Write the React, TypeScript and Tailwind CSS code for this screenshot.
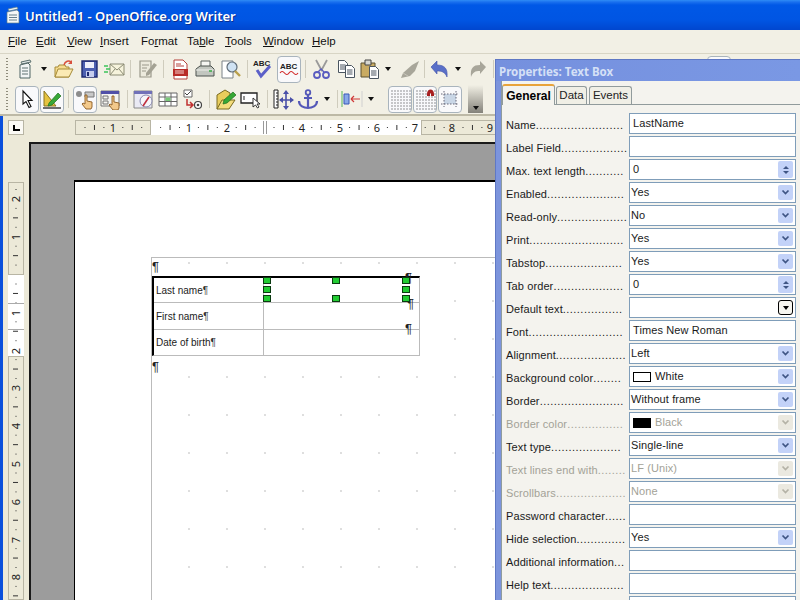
import React from "react";

const uiFont = "font-['Liberation_Sans',sans-serif]";

// toolbar bits
const Slot = ({ className = "", on = false, children }: { className?: string; on?: boolean; children?: React.ReactNode }) => (
  <div
    className={`w-[24px] h-[27px] shrink-0 flex items-center justify-center rounded-[4px] ${
      on ? "bg-[#f9f9fb] border border-[#a9b4bd]" : ""
    } ${className}`}
  >
    {children}
  </div>
);

const Sep = ({ className = "" }: { className?: string }) => <div className={`w-[1px] h-[18px] shrink-0 bg-[#cfccbd] ${className}`} />;

const Arrow = ({ className = "" }: { className?: string }) => (
  <div className={`w-[12px] h-[27px] shrink-0 flex items-center justify-center ${className}`}>
    <div className="w-0 h-0 border-x-[3.5px] border-x-transparent border-t-[4px] border-t-[#111]" />
  </div>
);

const Handle = () => (
  <div className="ml-[6px] w-[2px] h-[22px] shrink-0 bg-[repeating-linear-gradient(to_bottom,#8f8c7c_0,#8f8c7c_1px,transparent_1px,transparent_3px)]" />
);

const S = ({ children }: { children: React.ReactNode }) => (
  <svg width="22" height="22" viewBox="0 0 22 22" fill="none">
    {children}
  </svg>
);

const Hand = ({ x = 0, y = 0 }: { x?: number; y?: number }) => (
  <path
    transform={`translate(${x} ${y})`}
    d="M4 1h2v6l5 1v5l-1 2H5L1 10l1-1 2 1z"
    fill="#f3c98b"
    stroke="#8a5a20"
    strokeWidth="0.9"
  />
);

const DocLines = ({ x, y }: { x: number; y: number }) => (
  <g transform={`translate(${x} ${y})`}>
    <path d="M.5.5h6l3 3v9H.5z" fill="#fff" stroke="#4a5560" />
    <path d="M2 5h5.5M2 7h5.5M2 9h5.5" stroke="#4a5560" />
  </g>
);

const NewIcon = () => (
  <S>
    <path d="M6 4l9-2 1 2-9 2z" fill="#dfe6e6" stroke="#5c7070" />
    <path d="M5 7l8-2 2 2v13H5z" fill="#f2f5f5" stroke="#4f6464" />
    <path d="M7 10h6M7 13h6M7 16h6" stroke="#5c7070" />
  </S>
);
const OpenIcon = () => (
  <S>
    <path d="M2 9h3l1-2h6l1 2h3v10H2z" fill="#f6dc8e" stroke="#a58a38" />
    <path d="M2 19l3-8h15l-4 8z" fill="#fbeab4" stroke="#a58a38" />
    <path d="M11 7c1-4 5-5 7-3" stroke="#d8503c" strokeWidth="1.5" />
    <path d="M19 2v4h-4z" fill="#d8503c" />
  </S>
);
const SaveIcon = () => (
  <S>
    <path d="M4 3h15v16H4z" fill="#4c5fb0" stroke="#1f2a70" strokeWidth="1.4" />
    <path d="M7 4h9v6H7z" fill="#eef0fa" />
    <path d="M8 13h8v6H8z" fill="#c6cdee" />
    <path d="M9 14h2v4H9z" fill="#1f2a70" />
  </S>
);
const MailIcon = () => (
  <S>
    <path d="M7 6h14v11H7z" fill="#f6f3dc" stroke="#8b8b74" />
    <path d="M7 6l7 6 7-6M7 17l5-6M21 17l-5-6" stroke="#8b8b74" />
    <path d="M1 8h4M3 11h4M1 14h4" stroke="#3cc45a" strokeWidth="1.4" />
  </S>
);
const EditIcon = () => (
  <S>
    <path d="M4 3h11v16H4z" fill="#eceadd" stroke="#9a988a" strokeWidth="1.2" />
    <path d="M6 7h7M6 10h5M6 13h4" stroke="#9a988a" />
    <path d="M10 15l8-10 3 2-8 10-3 1z" fill="#a4a294" />
  </S>
);
const PdfIcon = () => (
  <S>
    <path d="M5 2h9l4 4v15H5z" fill="#fff" stroke="#b5413a" />
    <path d="M7 6h5M7 8h8" stroke="#b5413a" />
    <path d="M4 11h15v7H4z" fill="#b82c28" />
    <path d="M6 13h9M6 15h9" stroke="#f3d0cc" />
  </S>
);
const PrintIcon = () => (
  <S>
    <path d="M7 3h9v7H7z" fill="#f6f6f2" stroke="#5c635f" />
    <path d="M2 11l4-3h11l3 3v7H2z" fill="#c2c6bf" stroke="#4c524e" />
    <path d="M2 12h18" stroke="#f0f0ec" />
    <path d="M15 13h3" stroke="#3fae4a" strokeWidth="1.6" />
  </S>
);
const PreviewIcon = () => (
  <S>
    <path d="M3 3h11v17H3z" fill="#fff" stroke="#7a8288" />
    <circle cx="13" cy="9" r="5" fill="#cfe2f3" stroke="#5f6c78" strokeWidth="1.2" />
    <path d="M16 13l5 5" stroke="#b9a04c" strokeWidth="2.4" />
  </S>
);
const SpellIcon = () => (
  <S>
    <text x="1" y="8" fontSize="8" fontFamily="Liberation Sans" fontWeight="700" fill="#222">
      ABC
    </text>
    <path d="M5 12l4 6 9-10" stroke="#5c60c8" strokeWidth="3" />
  </S>
);
const AutoSpellIcon = () => (
  <S>
    <text x="2" y="11" fontSize="8" fontFamily="Liberation Sans" fontWeight="700" fill="#222">
      ABC
    </text>
    <path d="M2 15q2-3 4.500 0t4.500 0 4.500 0 4.500 0" stroke="#d02020" strokeWidth="1.1" />
  </S>
);
const CutIcon = () => (
  <S>
    <path d="M6 2l6 11M17 2l-6 11" stroke="#9a9a9a" strokeWidth="1.8" />
    <circle cx="7" cy="17" r="3" stroke="#5a5cc0" strokeWidth="1.8" />
    <circle cx="16" cy="17" r="3" stroke="#5a5cc0" strokeWidth="1.8" />
    <path d="M8 14l3-3 3 3" stroke="#5a5cc0" strokeWidth="1.4" />
  </S>
);
const CopyIcon = () => (
  <S>
    <DocLines x={3} y={2} />
    <DocLines x={10} y={7} />
  </S>
);
const PasteIcon = () => (
  <S>
    <path d="M2 5h14v14H2z" fill="#c9ab62" stroke="#5a5030" />
    <path d="M6 2h6v5H6z" fill="#d7d7d0" stroke="#444" />
    <DocLines x={10} y={8} />
  </S>
);
const BrushIcon = () => (
  <S>
    <path d="M20 3l-7 4-9 8-2 5 9-2 5-5z" fill="#a8a69a" />
    <path d="M4 15l5 3" stroke="#c6c4b8" />
  </S>
);
const UndoIcon = () => (
  <S>
    <path d="M2 9l6-6v4c7 0 11 3 10 12-2-5-5-6-10-6v3z" fill="#5a70c8" stroke="#3f50a8" strokeWidth="0.6" />
  </S>
);
const RedoIcon = () => (
  <S>
    <path d="M20 9l-6-6v4c-7 0-10 3-9 12 2-5 4-6 9-6v3z" fill="#a8a69a" />
  </S>
);
const PointerIcon = () => (
  <S>
    <path d="M7 3v13l3-2.500 3 6 2-1-3-6h4z" fill="#fff" stroke="#111" strokeWidth="1.1" />
  </S>
);
const DesignIcon = () => (
  <S>
    <path d="M3 3l12 15H3z" fill="#e6c340" stroke="#8a7420" />
    <path d="M8 15l9-10 3 3-9 9-4 1z" fill="#38a838" stroke="#1e6e1e" strokeWidth="0.7" />
    <path d="M2 20h18" stroke="#222" strokeWidth="1.3" />
  </S>
);
const ControlIcon = () => (
  <S>
    <circle cx="5" cy="6" r="3" fill="#8c8c8c" />
    <path d="M11 4h9v5h-9z" fill="#c8c8c8" stroke="#777" />
    <Hand x={7} y={6} />
  </S>
);
const WinHandIcon = () => (
  <S>
    <path d="M2 3h18v15H2z" fill="#f4f4f0" stroke="#777" />
    <path d="M2 3h18v3H2z" fill="#5150a8" />
    <path d="M4 8h5v3H4zM4 13h5v3H4z" stroke="#777" />
    <Hand x={9} y={7} />
  </S>
);
const FormIcon = () => (
  <S>
    <path d="M2 3h18v17H2z" fill="#eaeaf4" stroke="#888" />
    <path d="M2 3h18v3H2z" fill="#7070b8" />
    <circle cx="14" cy="13" r="6" fill="#f6f6fa" stroke="#8a8ab0" />
    <path d="M11 18l6-9" stroke="#c03040" strokeWidth="1.6" />
  </S>
);
const TableIcon = () => (
  <S>
    <path d="M2 5h18v13H2z" fill="#fff" stroke="#666" />
    <path d="M2 9h18M2 13.500h18M8 5v13M14 5v13" stroke="#666" />
    <path d="M8.500 9.500h5v3.500h-5z" fill="#78c878" />
  </S>
);
const TabOrderIcon = () => (
  <S>
    <path d="M2 2h8v7H2z" fill="#fff" stroke="#666" />
    <path d="M3 5l2 2 4-4" stroke="#444" />
    <path d="M5 11v6h6M8 14l3 3-3 3" stroke="#c03030" strokeWidth="1.5" />
    <circle cx="16" cy="17" r="3.500" fill="#fff" stroke="#444" strokeWidth="1.2" />
    <circle cx="16" cy="17" r="1.300" fill="#444" />
  </S>
);
const FolderPenIcon = () => (
  <S>
    <path d="M2 7l8-5 5 3v8l-13 8z" fill="#e9cd5c" stroke="#7a6a20" />
    <path d="M2 21l5-9h13l-6 9z" fill="#f4dd7c" stroke="#7a6a20" />
    <path d="M9 12l9-8 3 3-9 8-4 1z" fill="#36a836" stroke="#1e6e1e" strokeWidth="0.7" />
  </S>
);
const FieldIcon = () => (
  <S>
    <path d="M1 5h16v10H1z" fill="#fff" stroke="#222" strokeWidth="1.3" />
    <path d="M4 8v4" stroke="#222" />
    <path d="M13 10v9l2.500-2 2 3 1.500-1-2-3h3z" fill="#fff" stroke="#222" strokeWidth="0.9" />
  </S>
);
const PositionIcon = () => (
  <S>
    <path d="M2 2h4v18H2z" fill="#fff" stroke="#222" />
    <path d="M4 5h2M4 8h2M4 11h2M4 14h2M4 17h2" stroke="#222" />
    <path d="M14 5v14M8 12h13" stroke="#4a50a8" strokeWidth="1.6" />
    <path d="M14 2l3 4h-6zM14 22l3-4h-6zM7 12l4-3v6zM22 12l-4-3v6z" fill="#4a50a8" />
  </S>
);
const AnchorIcon = () => (
  <S>
    <circle cx="11" cy="4.500" r="2.300" stroke="#5458b8" strokeWidth="1.8" />
    <path d="M11 7v13M7 10h8M2 13c0 5 5 7 9 7s9-2 9-7" stroke="#5458b8" strokeWidth="2.200" />
  </S>
);
const WrapIcon = () => (
  <S>
    <path d="M1 3v16" stroke="#58b858" />
    <path d="M21 3v16" stroke="#d0d0d0" />
    <path d="M3 6h5v10H3z" fill="#88a8e8" stroke="#3858b8" />
    <path d="M10 11h9M10 11l3-3M10 11l3 3" stroke="#d03838" strokeWidth="1.2" />
  </S>
);
const DotsGrid = ({ red = false }: { red?: boolean }) => (
  <S>
    {Array.from({ length: 7 }).flatMap((_, r) =>
      Array.from({ length: 7 }).map((_, c) => (
        <rect key={`${r}-${c}`} x={2.500 + c * 3} y={2.500 + r * 3} width="1" height="1" fill="#333" />
      ))
    )}
    {red && <path d="M13 6c0-6 7-6 7 0v2h-3V6c0-1-1-1-1 0v2h-3z" fill="#a82020" />}
  </S>
);
const FrameIcon = () => (
  <S>
    <path d="M5 6h12v10H5z" fill="#c9d6e6" />
    <path d="M2 6h18M2 16h18M5 3v16M17 3v16" stroke="#667" strokeDasharray="1.500 1.500" />
  </S>
);

// rulers
const hRulerNums = [
  [113, "1"],
  [189, "1"],
  [227, "2"],
  [302, "4"],
  [340, "5"],
  [377, "6"],
  [415, "7"],
  [452, "8"],
  [490, "9"],
] as const;

const HRuler = () => {
  const ticks: React.ReactNode[] = [];
  for (let x = 84.500; x < 495; x += 9.450) {
    const i = Math.round((x - 84.500) / 9.450);
    if (i % 4 === 3) continue;
    const big = i % 4 === 1;
    ticks.push(<rect key={i} x={x - 75} y={big ? 5 : 7} width="1" height={big ? 5 : 1} fill="#333" />);
  }
  return (
    <div className="relative ml-[51px] w-[445px] h-[15px] flex shrink-0">
      <div className="w-[76px] bg-[#ece9d8] border border-[#b8b5a4]" />
      <div className="w-[270px] bg-white" />
      <div className="flex-1 bg-[#ece9d8] border border-[#b8b5a4]" />
      <svg className="absolute left-0 top-0" width="445" height="15">
        {ticks}
        <path d="M188.500 1v13M191.500 1v13" stroke="#999" />
        {hRulerNums.map(([x, n]) => (
          <text key={x} x={x - 75} y="12" textAnchor="middle" fontSize="11" fontFamily="Noto Sans" fill="#222">
            {n}
          </text>
        ))}
      </svg>
    </div>
  );
};

const vRulerNums = [
  [199, "2"],
  [237, "1"],
  [313, "1"],
  [351, "2"],
  [388, "3"],
  [426, "4"],
  [464, "5"],
  [502, "6"],
  [540, "7"],
  [577, "8"],
] as const;

const VRuler = () => {
  const marks: React.ReactNode[] = [];
  for (let i = 0; i < 46; i++) {
    const y = 189 + i * 9.450;
    if (i % 4 === 1) continue;
    const big = i % 4 === 3;
    marks.push(<rect key={i} x={big ? 5 : 7.500} y={y - 182} width={big ? 5 : 1} height="1" fill="#333" />);
  }
  return (
    <div className="relative ml-[5px] mt-[40px] w-[16px] h-[418px] flex flex-col shrink-0">
      <div className="h-[93px] bg-[#ece9d8] border border-[#b8b5a4]" />
      <div className="h-[81px] bg-white" />
      <div className="flex-1 bg-[#ece9d8] border border-[#b8b5a4]" />
      <svg className="absolute left-0 top-0" width="16" height="418">
        {marks}
        <path d="M0 121.500h16M0 147.500h16" stroke="#aaa" />
        {vRulerNums.map(([y, n]) => (
          <text
            key={y}
            x="0"
            y="0"
            transform={`translate(12 ${y - 182}) rotate(-90)`}
            textAnchor="middle"
            fontSize="11"
            fontFamily="Noto Sans"
            fill="#222"
          >
            {n}
          </text>
        ))}
      </svg>
    </div>
  );
};

// property rows
type Row = {
  label: string;
  dots: number;
  kind: "text" | "select" | "spin" | "combo" | "color";
  value?: string;
  off?: boolean;
  swatch?: string;
};

const rows: Row[] = [
  { label: "Name", dots: 25, kind: "text", value: "LastName" },
  { label: "Label Field", dots: 19, kind: "text" },
  { label: "Max. text length", dots: 11, kind: "spin", value: "0" },
  { label: "Enabled", dots: 22, kind: "select", value: "Yes" },
  { label: "Read-only", dots: 20, kind: "select", value: "No" },
  { label: "Print", dots: 27, kind: "select", value: "Yes" },
  { label: "Tabstop", dots: 22, kind: "select", value: "Yes" },
  { label: "Tab order", dots: 20, kind: "spin", value: "0" },
  { label: "Default text", dots: 17, kind: "combo" },
  { label: "Font", dots: 27, kind: "text", value: "Times New Roman" },
  { label: "Alignment", dots: 20, kind: "select", value: "Left" },
  { label: "Background color", dots: 8, kind: "color", value: "White", swatch: "bg-white" },
  { label: "Border", dots: 24, kind: "select", value: "Without frame" },
  { label: "Border color", dots: 16, kind: "color", value: "Black", swatch: "bg-black", off: true },
  { label: "Text type", dots: 20, kind: "select", value: "Single-line" },
  { label: "Text lines end with", dots: 8, kind: "select", value: "LF (Unix)", off: true },
  { label: "Scrollbars", dots: 20, kind: "select", value: "None", off: true },
  { label: "Password character", dots: 6, kind: "text" },
  { label: "Hide selection", dots: 14, kind: "select", value: "Yes" },
  { label: "Additional information", dots: 3, kind: "text" },
  { label: "Help text", dots: 21, kind: "text" },
  { label: "", dots: 0, kind: "text" },
];

const DropBtn = ({ off }: { off?: boolean }) => (
  <div
    className={`w-[15px] h-[15px] mr-[2px] shrink-0 rounded-[2px] flex items-center justify-center ${
      off ? "bg-[#ebe9e0]" : "bg-[#c3d2f8]"
    }`}
  >
    <svg width="9" height="7" viewBox="0 0 9 7" fill="none">
      <path d="M1.500 1.500l3 3 3-3" stroke={off ? "#b4b2a6" : "#3f5584"} strokeWidth="1.700" />
    </svg>
  </div>
);

const SpinBtn = () => (
  <div className="w-[15px] h-[17px] mr-[2px] shrink-0 rounded-[2px] bg-[#c3d2f8] flex flex-col items-center justify-center gap-[2px]">
    <div className="w-0 h-0 border-x-[3.5px] border-x-transparent border-b-[3.5px] border-b-[#3f5584]" />
    <div className="w-0 h-0 border-x-[3.5px] border-x-transparent border-t-[3.5px] border-t-[#3f5584]" />
  </div>
);

const PropRow = ({ row }: { row: Row }) => {
  const tone = row.off ? "text-[#a3a297]" : "text-[#1a1a1a]";
  const inset = row.kind === "text" || row.kind === "spin" ? "pl-[3px]" : "pl-[1px]";
  return (
    <div className="flex h-[21px] shrink-0">
      <div className={`ml-[4px] mr-[4px] w-[119px] pt-[4px] leading-[16px] tracking-[0.1px] whitespace-nowrap ${tone}`}>
        {row.label}
        <span className="tracking-[0.45px]">{".".repeat(row.dots)}</span>
      </div>
      <div className="w-[167px] h-[21px] bg-white border border-[#7f9db9] flex items-center">
        <div className={`flex-1 flex items-center gap-[4px] whitespace-nowrap leading-[15px] tracking-[0.1px] ${tone} ${inset}`}>
          {row.kind === "color" && (
            <div className={`ml-[2px] w-[18px] h-[10px] border border-black ${row.swatch}`} />
          )}
          {row.value}
        </div>
        {(row.kind === "select" || row.kind === "color") && <DropBtn off={row.off} />}
        {row.kind === "spin" && <SpinBtn />}
        {row.kind === "combo" && (
          <div className="w-[15px] h-[15px] mr-[2px] rounded-[3px] border border-black bg-[#f6f5ef] flex items-center justify-center">
            <div className="w-0 h-0 border-x-[3.5px] border-x-transparent border-t-[4px] border-t-black" />
          </div>
        )}
      </div>
    </div>
  );
};

const Pil = ({ className }: { className: string }) => (
  <span className={`absolute text-[13px] leading-[13px] text-[#222] ${className}`}>¶</span>
);

const Grip = ({ className }: { className: string }) => (
  <div className={`absolute w-[8px] h-[7px] bg-[#22cc33] border border-[#0a3a10] ${className}`} />
);

const Cell = ({ text, height, first }: { text: string; height: string; first?: boolean }) => (
  <div className={`flex border-[#bbb] ${height} ${first ? "" : "border-t"}`}>
    <div className="w-[110px] pl-[2px] flex items-center text-[10px] text-[#222] border-r border-[#bbb]">
      {text}
      <span className="text-[#333]">¶</span>
    </div>
    <div className="flex-1" />
  </div>
);

export default function App() {
  return (
    <div className={`relative w-[800px] h-[600px] overflow-hidden bg-[#ece9d8] text-[11px] ${uiFont}`}>
      {/* title bar */}
      <div className="h-[30px] flex items-center pl-[5px] gap-[4px] bg-[linear-gradient(to_bottom,#2f8cf5_0,#1a70ee_2px,#0058e6_5px,#0055e3_20px,#0046cf_30px)]">
        <svg width="16" height="18" viewBox="0 0 16 18" fill="none">
          <path d="M3 3l9-2 1 2-9 2z" fill="#eef3f3" stroke="#5c7c8c" strokeWidth="0.7" />
          <path d="M2 6l10-2 2 2v11H2z" fill="#f4f7f7" stroke="#5c7c8c" strokeWidth="0.7" />
          <path d="M4 9h8M4 11.500h8M4 14h8" stroke="#66808c" />
        </svg>
        <span className="pt-[3px] text-white text-[13px] font-semibold font-['Noto_Sans',sans-serif] [text-shadow:1px_1px_#0a2f90]">
          Untitled1 - OpenOffice.org Writer
        </span>
      </div>

      <div className="flex h-[570px]">
        <div className="w-[3px] shrink-0 bg-[#0a4fdc]" />
        <div className="flex-1 min-w-0 flex flex-col bg-[#ece9d8]">
          {/* menu */}
          <div className="h-[24px] -ml-[3px] pl-[8px] pt-[1px] flex items-center bg-[#f2f0e5] border-b border-[#d8d5c5] text-[11.5px] text-[#111]">
            <span className="w-[28px]"><u>F</u>ile</span>
            <span className="w-[31px]"><u>E</u>dit</span>
            <span className="w-[33px]"><u>V</u>iew</span>
            <span className="w-[41px]"><u>I</u>nsert</span>
            <span className="w-[46px]">Fo<u>r</u>mat</span>
            <span className="w-[38px]">Ta<u>b</u>le</span>
            <span className="w-[38px]"><u>T</u>ools</span>
            <span className="w-[49px]"><u>W</u>indow</span>
            <span><u>H</u>elp</span>
          </div>

          {/* toolbars */}
          <div className="h-[30px] -ml-[3px] flex items-center bg-[#f2f0e5] overflow-hidden">
            <Handle />
            <Slot className="ml-[6px]"><NewIcon /></Slot>
            <Arrow />
            <Slot className="ml-[2px]"><OpenIcon /></Slot>
            <Slot className="ml-[1px]"><SaveIcon /></Slot>
            <Slot className="ml-[1px]"><MailIcon /></Slot>
            <Sep className="ml-[4px]" />
            <Slot className="ml-[4px]"><EditIcon /></Slot>
            <Sep className="ml-[4px]" />
            <Slot className="ml-[4px]"><PdfIcon /></Slot>
            <Slot className="ml-[1px]"><PrintIcon /></Slot>
            <Slot className="ml-[1px]"><PreviewIcon /></Slot>
            <Sep className="ml-[5px]" />
            <Slot className="ml-[3px]"><SpellIcon /></Slot>
            <Slot className="ml-[2px]" on><AutoSpellIcon /></Slot>
            <Sep className="ml-[4px]" />
            <Slot className="ml-[3px]"><CutIcon /></Slot>
            <Slot className="ml-[1px]"><CopyIcon /></Slot>
            <Slot><PasteIcon /></Slot>
            <Arrow />
            <Slot className="ml-[4px]"><BrushIcon /></Slot>
            <Sep className="ml-[2px]" />
            <Slot className="ml-[3px]"><UndoIcon /></Slot>
            <Arrow />
            <Slot className="ml-[1px]"><RedoIcon /></Slot>
            <Sep className="ml-[4px]" />
            <Slot className="ml-[213px]" on />
          </div>
          <div className="h-[32px] -ml-[3px] flex items-center bg-[#f2f0e5] border-b-2 border-[#bdb9a6] overflow-hidden">
            <Handle />
            <Slot className="ml-[7px]" on><PointerIcon /></Slot>
            <Slot className="ml-[1px]" on><DesignIcon /></Slot>
            <Sep className="ml-[4px]" />
            <Slot className="ml-[4px]" on><ControlIcon /></Slot>
            <Slot className="ml-[1px]"><WinHandIcon /></Slot>
            <Sep className="ml-[5px]" />
            <Slot className="ml-[3px]"><FormIcon /></Slot>
            <Slot className="ml-[1px]"><TableIcon /></Slot>
            <Slot className="ml-[1px]"><TabOrderIcon /></Slot>
            <Sep className="ml-[4px]" />
            <Slot className="ml-[4px]"><FolderPenIcon /></Slot>
            <Slot className="ml-[1px]"><FieldIcon /></Slot>
            <Sep className="ml-[4px]" />
            <Slot className="ml-[3px]"><PositionIcon /></Slot>
            <Slot className="ml-[1px]"><AnchorIcon /></Slot>
            <Arrow className="ml-[1px]" />
            <Sep className="ml-[4px]" />
            <Slot className="ml-[2px]"><WrapIcon /></Slot>
            <Arrow className="ml-[1px]" />
            <Slot className="ml-[11px]" on><DotsGrid /></Slot>
            <Slot className="ml-[1px]" on><DotsGrid red /></Slot>
            <Slot className="ml-[1px]" on><FrameIcon /></Slot>
            <div className="ml-[6px] w-[15px] h-[28px] flex items-end justify-center pb-[3px] bg-[linear-gradient(to_bottom,#f2f0e5,#84827a)]">
              <div className="w-0 h-0 border-x-[3.5px] border-x-transparent border-t-[4px] border-t-[#111]" />
            </div>
          </div>

          {/* horizontal ruler */}
          <div className="h-[26px] flex items-start pt-[4px] shrink-0">
            <div className="ml-[5px] w-[16px] h-[15px] shrink-0 bg-[#fbfaf5] border border-[#b8b5a4] flex items-center justify-center">
              <div className="w-[7px] h-[6px] border-l-2 border-b-2 border-black" />
            </div>
            <HRuler />
          </div>

          {/* document area */}
          <div className="flex flex-1 min-h-0">
            <VRuler />
            <div className="ml-[5px] flex-1 min-w-0 bg-[#9c9c9c] border-l-2 border-t-2 border-[#1a1a1a] pl-[43px] pt-[36px] overflow-hidden">
              <div className="w-[800px] h-[600px] bg-white border-l border-t-2 border-black pl-[76px] pt-[75px]">
                <div className="relative w-[600px] h-[500px] border-l border-t border-[#bbb] bg-[radial-gradient(circle,#dcdcdc_0.7px,transparent_0.8px)] bg-[size:38px_38px] bg-[position:18px_-14px] pt-[18px]">
                  <div className="w-[268px] border-l-2 border-t-2 border-b border-r border-l-black border-t-black border-b-[#bbb] border-r-[#bbb] bg-white">
                    <Cell text="Last name" height="h-[24px]" first />
                    <Cell text="First name" height="h-[27px]" />
                    <Cell text="Date of birth" height="h-[26px]" />
                  </div>
                  <Pil className="left-[0px] top-[2px]" />
                  <Pil className="left-[0px] top-[102px]" />
                  <Pil className="left-[253px] top-[13px]" />
                  <Pil className="left-[255px] top-[39px]" />
                  <Pil className="left-[253px] top-[64px]" />
                  <Grip className="left-[111px] top-[19px]" />
                  <Grip className="left-[111px] top-[28px]" />
                  <Grip className="left-[111px] top-[37px]" />
                  <Grip className="left-[180px] top-[19px]" />
                  <Grip className="left-[180px] top-[37px]" />
                  <Grip className="left-[250px] top-[19px]" />
                  <Grip className="left-[250px] top-[28px]" />
                  <Grip className="left-[250px] top-[37px]" />
                </div>
              </div>
            </div>
          </div>
        </div>
      </div>

      {/* floating properties window */}
      <div className="absolute left-[495px] top-[59px] w-[305px] h-[541px] bg-[#7c94dc] border-l border-t border-[#5f78c4] flex flex-col">
        <div className="h-[21px] pl-[3px] pt-[3px] flex items-center text-[11.5px] font-bold font-['Noto_Sans',sans-serif] text-[#d5e0f6] shrink-0 bg-[linear-gradient(to_right,#7590de,#7a98e4)]">
          Properties: Text Box
        </div>
        <div className="ml-[5px] flex-1 min-h-0 bg-[#f4f3ee] border-l border-[#8f9b9c] flex flex-col">
          <div className="h-[24px] pt-[3px] flex items-end border-b border-[#919b9c] shrink-0">
            <div className="w-[53px] h-[21px] -mb-[1px] bg-[#f4f3ee] border-x border-[#919b9c] border-t-2 border-t-[#e8a33a] rounded-t-[3px] font-bold text-[12px] text-black flex items-center justify-center">
              General
            </div>
            <div className="ml-[1px] w-[31px] h-[18px] bg-[#f0efe6] border-x border-t border-[#919b9c] rounded-t-[3px] text-[11.500px] text-[#222] flex items-center justify-center">
              Data
            </div>
            <div className="ml-[2px] w-[43px] h-[18px] bg-[#f0efe6] border-x border-t border-[#919b9c] rounded-t-[3px] text-[11.500px] text-[#222] flex items-center justify-center">
              Events
            </div>
          </div>
          <div className="pt-[8px] flex flex-col gap-[2px] overflow-hidden">
            {rows.map((r, i) => (
              <PropRow key={i} row={r} />
            ))}
          </div>
        </div>
      </div>
    </div>
  );
}
